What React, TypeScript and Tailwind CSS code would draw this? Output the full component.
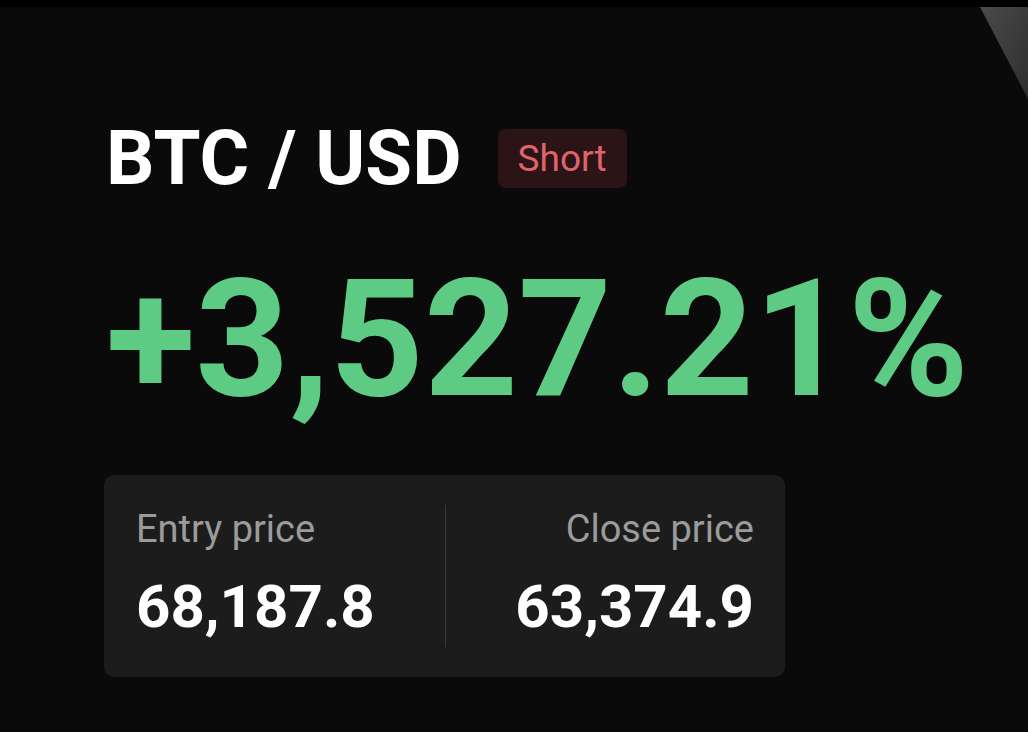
export default function App() {
  return (
    <div className="relative h-[732px] w-[1028px] overflow-hidden bg-[#0a0a0a] font-['Roboto',sans-serif]">
      <div className="h-[7px] bg-black" />

      {/* corner shard */}
      <svg className="absolute right-0 top-[7px]" width="48" height="92" viewBox="0 0 48 92">
        <defs>
          <linearGradient id="shard" x1="0" y1="0" x2="1" y2="1">
            <stop offset="0" stopColor="#4a4a4a" />
            <stop offset="1" stopColor="#2e2e2e" />
          </linearGradient>
        </defs>
        <polygon points="0,0 48,0 48,92" fill="url(#shard)" />
      </svg>

      <div className="pl-[106px] pt-[113px]">
        <div className="flex items-center">
          <h1 className="text-[76px] font-bold leading-none text-white">BTC / USD</h1>
          <span className="ml-[36px] flex h-[59px] w-[129px] items-center justify-center rounded-[8px] bg-[#2a1416] text-[37px] leading-none text-[#e0636c]">
            Short
          </span>
        </div>

        <div className="mt-[61px] text-[164px] font-bold leading-none text-[#5ecb84]">+3,527.21%</div>

        <div className="mt-[54px] flex w-[681px] -translate-x-[2px] rounded-[10px] bg-[#1c1c1c] py-[30px] pl-[32px] pr-[31px]">
          <div className="flex-1 pb-[10px] pt-[5px]">
            <div className="text-[38px] leading-none text-[#9b9b9b]">Entry price</div>
            <div className="mt-[29px] text-[60px] font-bold leading-none text-white">68,187.8</div>
          </div>
          <div className="w-px self-stretch bg-[#3a3a3a]" />
          <div className="flex-1 pb-[10px] pt-[5px] text-right">
            <div className="text-[38px] leading-none text-[#9b9b9b]">Close price</div>
            <div className="mt-[29px] text-[60px] font-bold leading-none text-white">63,374.9</div>
          </div>
        </div>
      </div>
    </div>
  )
}
